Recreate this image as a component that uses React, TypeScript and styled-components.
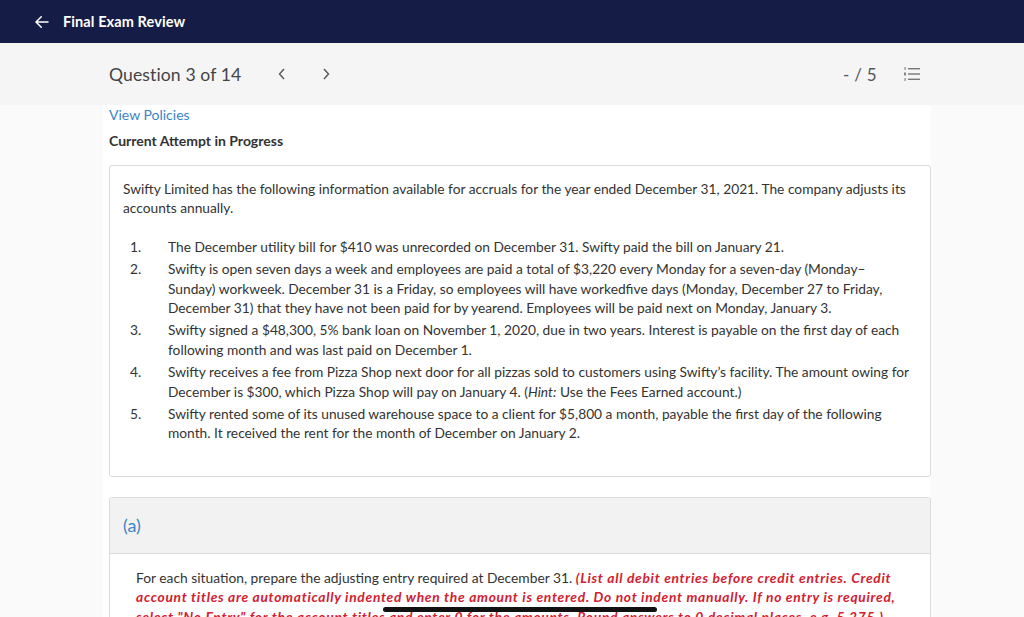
import styled, { createGlobalStyle } from 'styled-components';

const GlobalStyle = createGlobalStyle`
    html, body {
        margin: 0;
        padding: 0;
        background: #fafafa;
        font-family: Lato, "Liberation Sans", Arial, sans-serif;
        color: #333;
        overflow: hidden;
    }
`;

const situations = [
    <>The December utility bill for $410 was unrecorded on December 31. Swifty paid the bill on January 21.</>,
    <>Swifty is open seven days a week and employees are paid a total of $3,220 every Monday for a seven-day (Monday–Sunday) workweek. December 31 is a Friday, so employees will have workedfive days (Monday, December 27 to Friday, December 31) that they have not been paid for by yearend. Employees will be paid next on Monday, January 3.</>,
    <>Swifty signed a $48,300, 5% bank loan on November 1, 2020, due in two years. Interest is payable on the first day of each following month and was last paid on December 1.</>,
    <>Swifty receives a fee from Pizza Shop next door for all pizzas sold to customers using Swifty’s facility. The amount owing for December is $300, which Pizza Shop will pay on January 4. (<i>Hint:</i> Use the Fees Earned account.)</>,
    <>Swifty rented some of its unused warehouse space to a client for $5,800 a month, payable the first day of the following month. It received the rent for the month of December on January 2.</>,
]

const App = () => {
    return (
        <Page>
            <GlobalStyle />
            <NavBar>
                <BackArrow viewBox="0 0 24 24">
                    <path d="M20 12H5M11 5l-7 7 7 7" fill="none" stroke="#fff" strokeWidth="2" strokeLinecap="round" strokeLinejoin="round" />
                </BackArrow>
                <NavTitle>Final Exam Review</NavTitle>
            </NavBar>

            <QuestionBar>
                <QuestionInner>
                    <QuestionLabel>Question 3 of 14</QuestionLabel>
                    <Chevron viewBox="0 0 10 14">
                        <path d="M7 2L2.5 7L7 12" />
                    </Chevron>
                    <Chevron viewBox="0 0 10 14">
                        <path d="M3 2L7.5 7L3 12" />
                    </Chevron>
                    <Spacer />
                    <Score>- / 5</Score>
                    <ListIcon viewBox="0 0 18 16">
                        <rect x="1.5" y="1" width="1.2" height="3" fill="#888" />
                        <rect x="1" y="6.5" width="2" height="3" fill="#888" />
                        <rect x="1.5" y="12" width="1.2" height="3" fill="#888" />
                        <rect x="5" y="2" width="12" height="1.4" fill="#777" />
                        <rect x="5" y="7.3" width="12" height="1.4" fill="#777" />
                        <rect x="5" y="12.6" width="12" height="1.4" fill="#777" />
                    </ListIcon>
                </QuestionInner>
            </QuestionBar>

            <Column>
                <PolicyLink>View Policies</PolicyLink>
                <AttemptTitle>Current Attempt in Progress</AttemptTitle>

                <ProblemBox>
                    <Intro>
                        Swifty Limited has the following information available for accruals for the year ended December 31, 2021. The company adjusts its accounts annually.
                    </Intro>
                    <Situations>
                        {situations.map((text, i) => (
                            <Situation key={i}>
                                <ItemNumber>{i + 1}.</ItemNumber>
                                <ItemText>{text}</ItemText>
                            </Situation>
                        ))}
                    </Situations>
                </ProblemBox>

                <PartBox>
                    <PartHeader>(a)</PartHeader>
                    <PartBody>
                        For each situation, prepare the adjusting entry required at December 31.{' '}
                        <Instruction>
                            (List all debit entries before credit entries. Credit account titles are automatically indented when the amount is entered. Do not indent manually. If no entry is required, select "No Entry" for the account titles and enter 0 for the amounts. Round answers to 0 decimal places, e.g. 5,275.)
                        </Instruction>
                    </PartBody>
                </PartBox>
            </Column>

            <HomeIndicator />
        </Page>
    )
}

const Page = styled.div`
    height: 617px;
    display: flex;
    flex-direction: column;
    position: relative;
    overflow: hidden;
`;

const NavBar = styled.div`
    height: 43px;
    flex-shrink: 0;
    background: #151d46;
    display: flex;
    align-items: center;
    padding-left: 33px;
    gap: 12px;
`;

const BackArrow = styled.svg`
    width: 18px;
    height: 18px;
`;

const NavTitle = styled.div`
    color: #fff;
    font-size: 14.5px;
    font-weight: 700;
    letter-spacing: 0.1px;
`;

const QuestionBar = styled.div`
    height: 62px;
    flex-shrink: 0;
    background: #f5f5f6;
`;

const QuestionInner = styled.div`
    margin-left: 109px;
    width: 812px;
    height: 100%;
    display: flex;
    align-items: center;
`;

const QuestionLabel = styled.div`
    font-size: 17.6px;
    color: #444;
    margin-right: 36px;
    letter-spacing: 0.1px;
`;

const Chevron = styled.svg`
    width: 10px;
    height: 14px;
    margin-right: 34px;
    fill: none;
    stroke: #555;
    stroke-width: 1.4;
`;

const Spacer = styled.div`
    flex: 1;
`;

const Score = styled.div`
    font-size: 17px;
    color: #555;
    margin-right: 26px;
    letter-spacing: 0.3px;
`;

const ListIcon = styled.svg`
    width: 18px;
    height: 16px;
`;

const Column = styled.div`
    flex: 1;
    margin-left: 103px;
    width: 828px;
    background: #fff;
    padding: 0 0 0 6px;
    box-sizing: border-box;
`;

const PolicyLink = styled.div`
    color: #3a85c5;
    font-size: 14px;
    margin-top: 1px;
    line-height: 18px;
`;

const AttemptTitle = styled.div`
    color: #333;
    font-size: 14px;
    font-weight: 700;
    margin-top: 8px;
    line-height: 18px;
`;

const ProblemBox = styled.div`
    margin-top: 15px;
    border: 1px solid #dcdcdc;
    border-radius: 3px;
    padding: 13px 19px 33px 13px;
    font-size: 13.75px;
    line-height: 19.4px;
    color: #333;
`;

const Intro = styled.p`
    margin: 0 0 19px;
`;

const Situations = styled.ol`
    list-style: none;
    margin: 0;
    padding: 0;
    display: flex;
    flex-direction: column;
    gap: 3px;
`;

const Situation = styled.li`
    display: flex;
`;

const ItemNumber = styled.span`
    width: 45px;
    padding-left: 7px;
    box-sizing: border-box;
    flex-shrink: 0;
`;

const ItemText = styled.span`
    flex: 1;
`;

const PartBox = styled.div`
    margin-top: 20px;
    border: 1px solid #dcdcdc;
    border-radius: 3px;
    overflow: hidden;
`;

const PartHeader = styled.div`
    background: #f2f2f2;
    border-bottom: 1px solid #dcdcdc;
    height: 55px;
    display: flex;
    align-items: center;
    padding-left: 13px;
    color: #3a85c5;
    font-size: 18px;
`;

const PartBody = styled.div`
    padding: 14px 26px 10px;
    font-size: 13.8px;
    line-height: 19.5px;
    color: #333;
`;

const Instruction = styled.span`
    color: #d3202f;
    font-weight: 700;
    font-style: italic;
    letter-spacing: 0.7px;
`;

const HomeIndicator = styled.div`
    position: absolute;
    left: 383px;
    bottom: 5px;
    width: 274px;
    height: 5px;
    border-radius: 3px;
    background: #111;
`;

export default App
